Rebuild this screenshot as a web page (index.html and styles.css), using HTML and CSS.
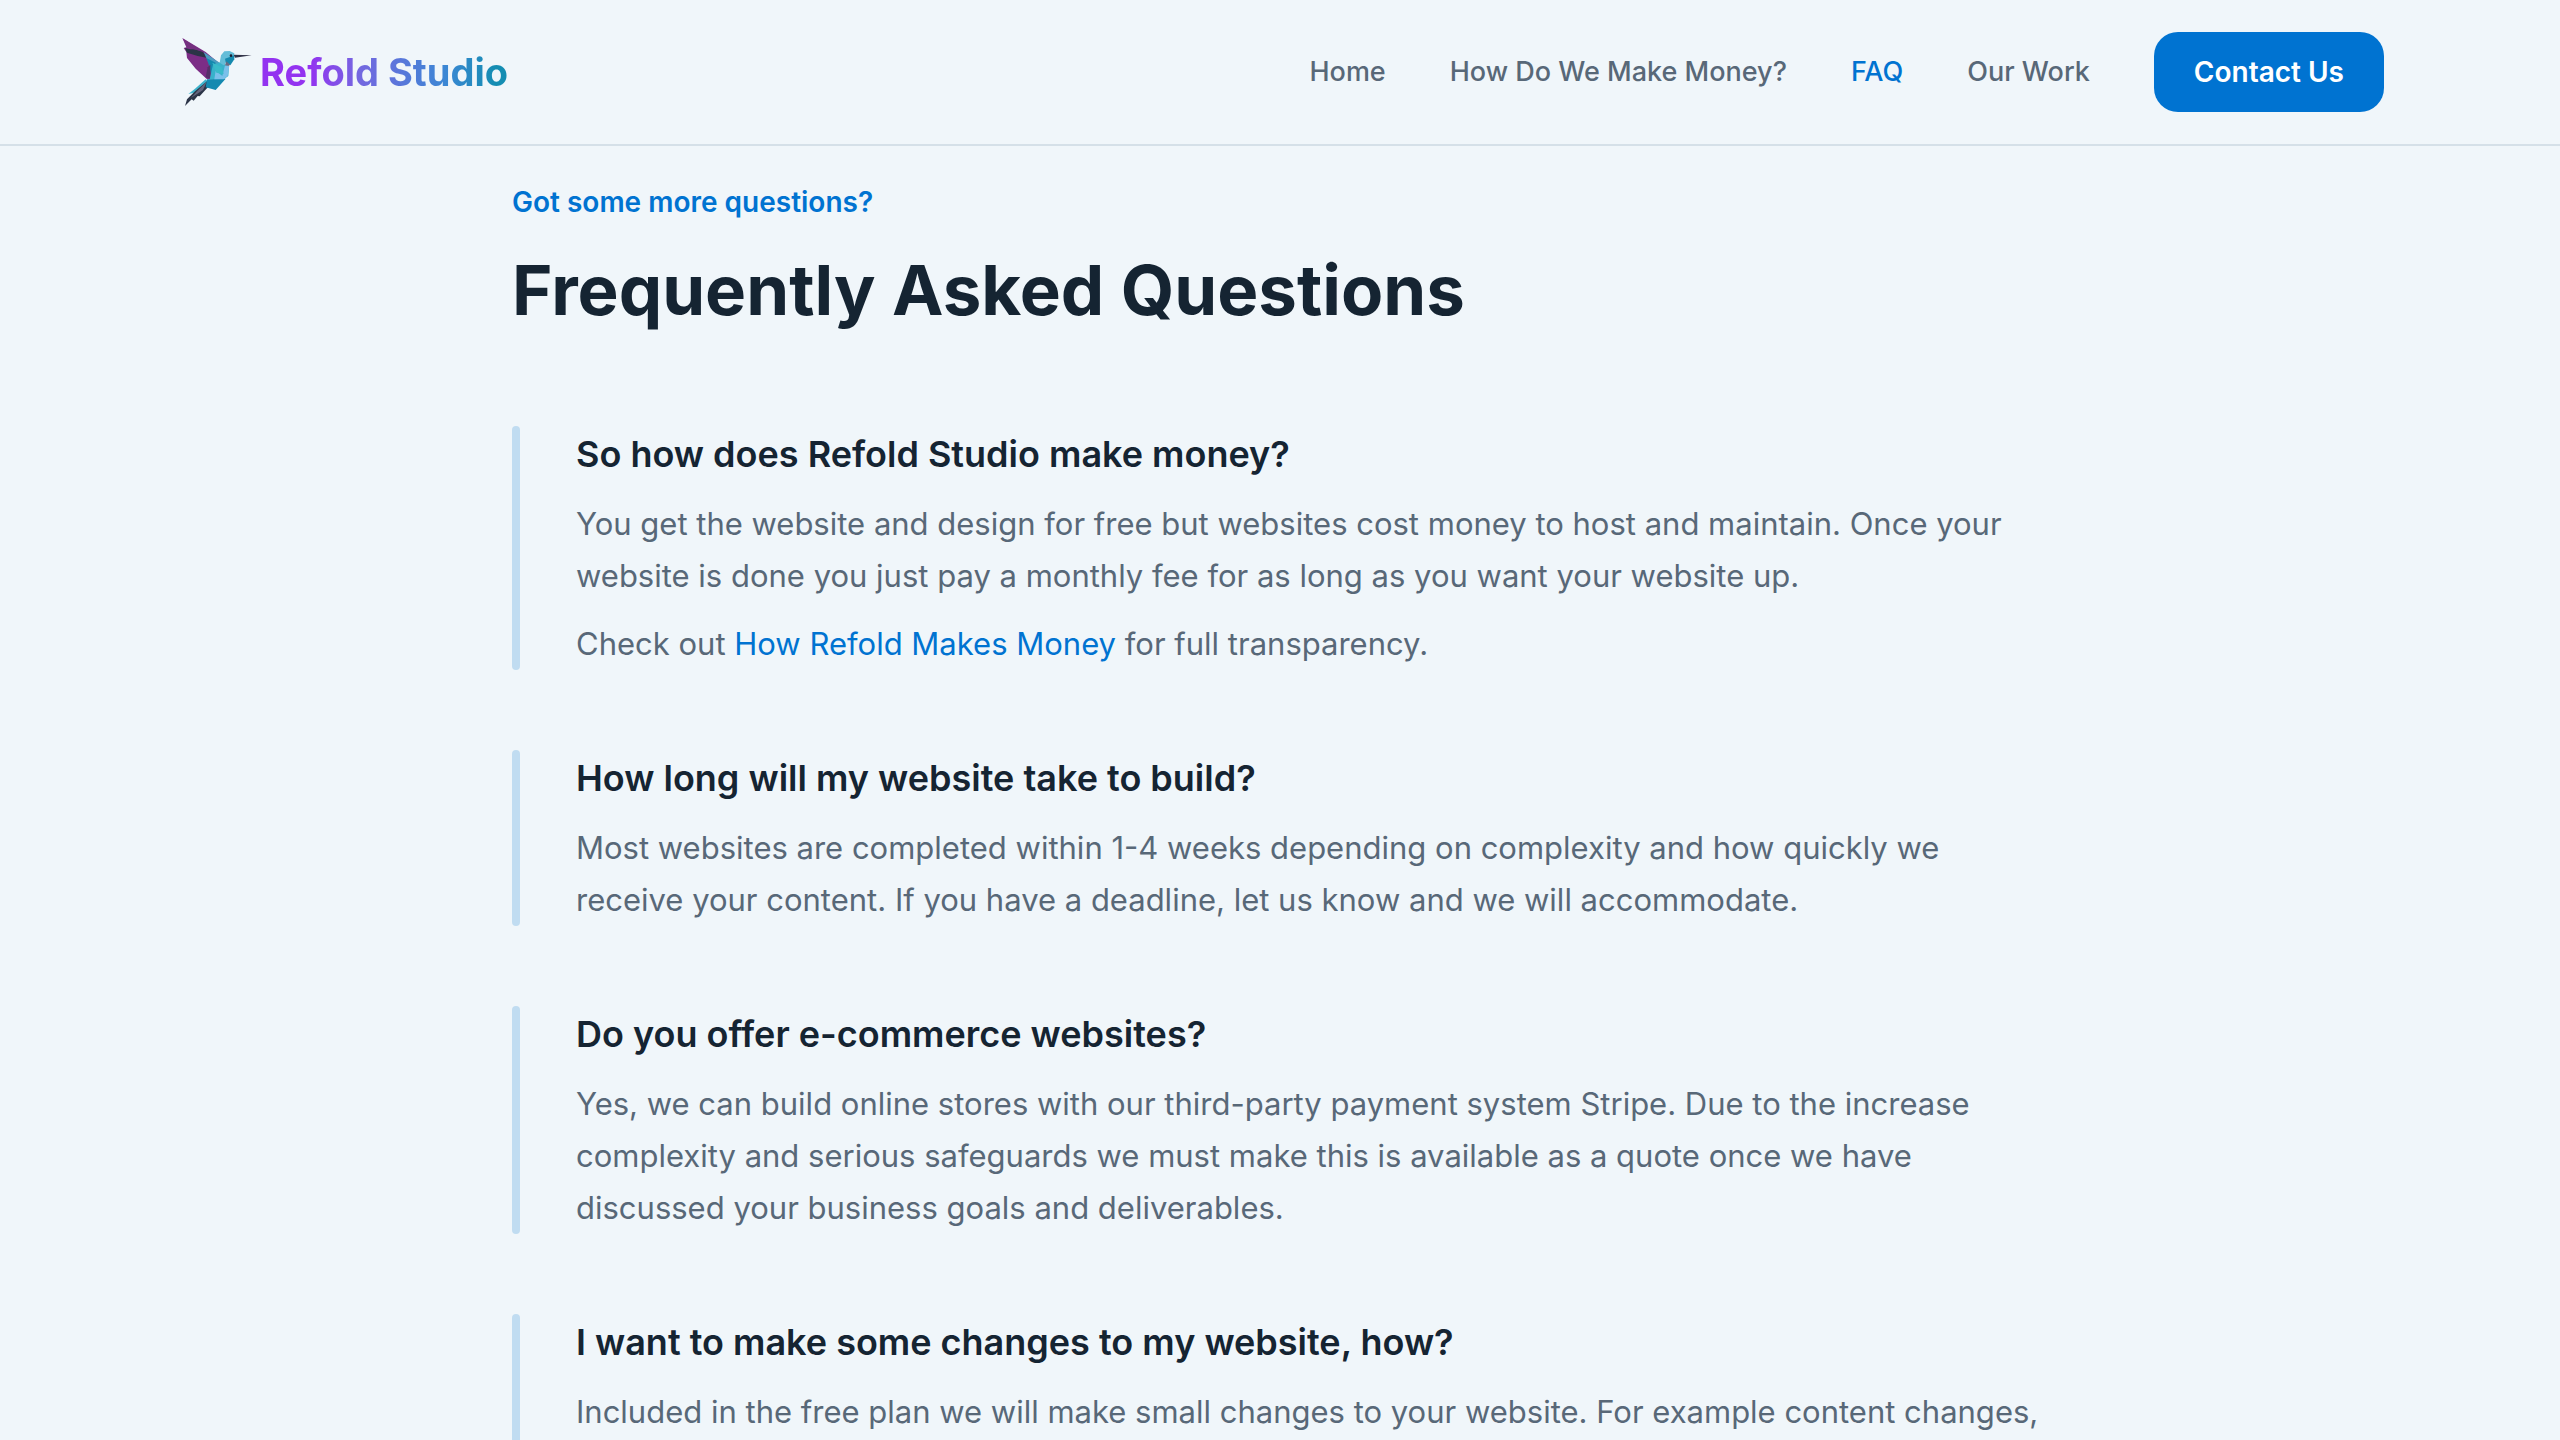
FILE: index.html
```
<!DOCTYPE html>
<html lang="en">
<head>
    <meta charset="UTF-8">
    <meta name="viewport" content="width=device-width, initial-scale=1.0">
    <title>FAQ | Refold Studio</title>
    <link rel="stylesheet" href="styles.css">
</head>
<body>

<header class="header">
    <div class="header-inner">
        <a class="logo" href="#">
            <svg class="logo-bird" viewBox="3 6 240 240" aria-hidden="true">
                <!-- tail -->
                <path fill="#3fb4cd" d="M92 148 L60 176 L40 192 L58 188 L104 162 Z"/>
                <path fill="#2b3447" d="M98 152 L60 184 L36 208 L30 228 L50 208 L56 212 L68 198 L74 199 L104 166 Z"/>
                <path fill="#64647c" d="M96 154 L66 184 L48 204 L84 180 Z"/>
                <!-- wing -->
                <path fill="#7c2d86" d="M22 24 L92 66 L128 96 L110 148 L96 148 L62 116 L36 84 L34 66 L26 54 L34 52 Z"/>
                <path fill="#2b3447" d="M30 54 L46 58 L58 58 L84 66 L98 84 L68 78 L36 68 Z"/>
                <path fill="#74307f" d="M24 26 L84 64 L56 58 L36 50 Z"/>
                <path fill="#4c9cc0" d="M86 66 L134 98 L138 112 L120 124 L94 84 Z"/>
                <path fill="#1489ae" d="M94 84 L122 98 L110 146 L104 112 Z"/>
                <path fill="#563069" d="M98 112 L106 104 L106 146 L92 142 Z"/>
                <!-- body -->
                <path fill="#38b2cb" d="M114 104 L138 96 L162 110 L160 138 L138 154 L104 148 Z"/>
                <path fill="#1489b0" d="M96 148 L120 148 L152 146 L122 180 L92 172 Z"/>
                <path fill="#7ac0ea" d="M150 106 L163 108 L158 138 L146 148 L118 148 L122 122 L142 138 Z"/>
                <path fill="#39bbc9" d="M112 98 L140 112 L146 132 L124 128 Z"/>
                <!-- head -->
                <path fill="#63bdd8" d="M134 98 L138 76 L148 64 L164 63 L178 70 L176 84 L160 92 L146 106 Z"/>
                <path fill="#1489ae" d="M150 86 L178 76 L178 88 L166 106 L152 96 Z"/>
                <path fill="#656b84" d="M154 94 L166 104 L160 108 L150 106 Z"/>
                <path fill="#303247" d="M176 74 L230 76 L180 83 Z"/>
                <circle fill="#1d2233" cx="168" cy="77" r="4"/>
            </svg>
            <span class="logo-text">Refold Studio</span>
        </a>
        <nav class="nav">
            <a href="#">Home</a>
            <a href="#">How Do We Make Money?</a>
            <a class="active" href="#">FAQ</a>
            <a href="#">Our Work</a>
            <a class="btn" href="#">Contact Us</a>
        </nav>
    </div>
</header>

<main class="container">
    <p class="eyebrow">Got some more questions?</p>
    <h1>Frequently Asked Questions</h1>

    <div class="faq-list">
        <section class="faq-item">
            <div class="faq-content">
                <h2>So how does Refold Studio make money?</h2>
                <p>You get the website and design for free but websites cost money to host and maintain. Once your website is done you just pay a monthly fee for as long as you want your website up.</p>
                <p>Check out <a href="#">How Refold Makes Money</a> for full transparency.</p>
            </div>
        </section>
        <section class="faq-item">
            <div class="faq-content">
                <h2>How long will my website take to build?</h2>
                <p>Most websites are completed within 1-4 weeks depending on complexity and how quickly we receive your content. If you have a deadline, let us know and we will accommodate.</p>
            </div>
        </section>
        <section class="faq-item">
            <div class="faq-content">
                <h2>Do you offer e-commerce websites?</h2>
                <p>Yes, we can build online stores with our third-party payment system Stripe. Due to the increase complexity and serious safeguards we must make this is available as a quote once we have discussed your business goals and deliverables.</p>
            </div>
        </section>
        <section class="faq-item">
            <div class="faq-content">
                <h2>I want to make some changes to my website, how?</h2>
                <p>Included in the free plan we will make small changes to your website. For example content changes,</p>
            </div>
        </section>
    </div>
</main>

</body>
</html>
```
FILE: styles.css
```
* {
    box-sizing: border-box;
}
body {
    font-family: Inter, sans-serif;
    background-color: #f0f6fa;
    color: #586878;
    margin: 0;
    font-size: 31px;
    line-height: 52px;
}
a {
    color: #0073d1;
    text-decoration: none;
}
h1, h2, p {
    margin: 0;
}
.header {
    border-bottom: 2px solid #d5e0e8;
}
.header-inner {
    display: flex;
    align-items: center;
    justify-content: space-between;
    max-width: 2272px;
    margin: 0 auto;
    padding: 32px;
}
.logo {
    display: flex;
    align-items: center;
    gap: 4px;
}
.logo-bird {
    width: 80px;
    height: 80px;
}
.logo-text {
    font-size: 38px;
    font-weight: 700;
    background: linear-gradient(to right, #9333f0 20%, #7468e0 40%, #3b87d4 75%, #148db2 95%);
    -webkit-background-clip: text;
    background-clip: text;
    color: transparent;
}
.nav {
    display: flex;
    align-items: center;
    gap: 64px;
    font-size: 27px;
    font-weight: 500;
    line-height: 40px;
}
.nav a {
    color: #586878;
}
.nav .active {
    color: #0073d1;
}
.nav .btn {
    background-color: #0073d1;
    color: #fff;
    font-size: 28px;
    font-weight: 600;
    padding: 20px 40px;
    border-radius: 24px;
}
.container {
    max-width: 1600px;
    margin: 0 auto;
    padding: 36px 32px 80px;
}
.eyebrow {
    color: #0073d1;
    font-size: 28px;
    font-weight: 600;
    line-height: 40px;
}
h1 {
    color: #152432;
    font-size: 69px;
    font-weight: 700;
    line-height: 80px;
    margin: 28px 0 96px;
}
.faq-list {
    display: flex;
    flex-direction: column;
    gap: 80px;
}
.faq-item {
    display: flex;
    gap: 56px;
}
.faq-item::before {
    content: "";
    flex: none;
    width: 8px;
    border-radius: 4px;
    background-color: #c0dcf1;
}
.faq-item:last-child .faq-content {
    padding-bottom: 52px;
}
.faq-content {
    display: flex;
    flex-direction: column;
    gap: 16px;
}
.faq-content h2 {
    color: #152432;
    font-size: 36px;
    font-weight: 600;
    line-height: 56px;
}
```
